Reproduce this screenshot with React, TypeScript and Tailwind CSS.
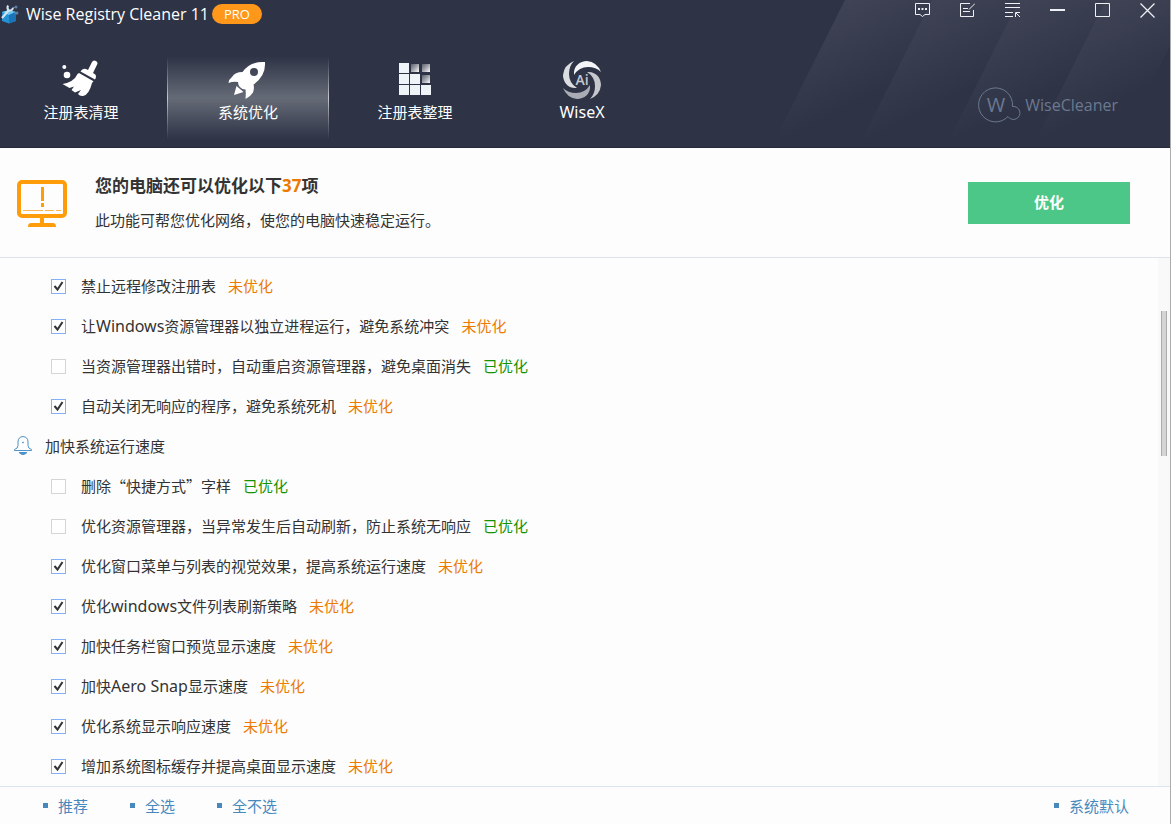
import type { ReactNode } from "react";

type Item = { id: string; label: ReactNode; done?: boolean };

const SECURITY_ITEMS: Item[] = [
  { id: "remote-registry", label: "禁止远程修改注册表" },
  { id: "separate-process", label: <>让<Latin>Windows</Latin>资源管理器以独立进程运行，避免系统冲突</> },
  { id: "restart-explorer", label: "当资源管理器出错时，自动重启资源管理器，避免桌面消失", done: true },
  { id: "close-hung", label: "自动关闭无响应的程序，避免系统死机" },
];

const SPEED_ITEMS: Item[] = [
  {
    id: "shortcut-text",
    // CJK face first, so that the quotes are full width
    label: <span className="font-['Noto_Sans_CJK_SC',sans-serif]">删除“快捷方式”字样</span>,
    done: true,
  },
  { id: "auto-refresh", label: "优化资源管理器，当异常发生后自动刷新，防止系统无响应", done: true },
  { id: "visual-effects", label: "优化窗口菜单与列表的视觉效果，提高系统运行速度" },
  { id: "file-list", label: <>优化<Latin>windows</Latin>文件列表刷新策略</> },
  { id: "taskbar-preview", label: "加快任务栏窗口预览显示速度" },
  { id: "aero-snap", label: <>加快<Latin>Aero Snap</Latin>显示速度</> },
  { id: "display-response", label: "优化系统显示响应速度" },
  { id: "icon-cache", label: "增加系统图标缓存并提高桌面显示速度" },
];

// Latin words are set a size larger than the Chinese text round them
function Latin({ children }: { children: ReactNode }) {
  return <span className="text-base leading-5">{children}</span>;
}

function AppLogo() {
  return (
    <svg width="20" height="20" viewBox="0 0 20 20">
      <path d="M2 8l7-2 7 2v9l-7 2.500-7-2.500z" fill="#2492d4" />
      <path d="M2 8l7 3 7-3-7-2z" fill="#6cc8f0" />
      <path d="M9 11v8.500l7-2.500V8z" fill="#1b73b8" />
      <path d="M12 4l4-1M13 8l4 2" stroke="#6c8fb5" />
      <circle cx="16" cy="3" r="1.500" fill="#5d7fa6" />
      <circle cx="17" cy="9" r="1.500" fill="#5d7fa6" />
      <path d="M2 14l7-8" stroke="#d5e4f1" strokeWidth="2.200" />
      <path d="M8 1.500Q6.500 5 9 6.500q3 .5 4-2.500" fill="none" stroke="#d5e4f1" strokeWidth="2" />
    </svg>
  );
}

function BroomIcon() {
  return (
    <svg width="40" height="40" viewBox="1 0 40 40" fill="#fff">
      <circle cx="4.300" cy="7" r="2" />
      <circle cx="7" cy="15" r="3.300" />
      <path d="M32 2a2.800 2.800 0 0 1 5 2.800l-4 8.200 2 1.200q2 2 0 5.300L20.500 11.500q2-3.700 5.500-2.500l2 1z" />
      <path d="M19 13l14.500 8.200-1.500 1.800Q29 35 23 36q-3 .5-5-2l3-4-6 2.500-3.500-2.500 2.500-3.500-4.500 1.500L2.500 24Q14 22 17.500 14z" />
    </svg>
  );
}

function RocketIcon() {
  return (
    <svg width="40" height="40" viewBox="0 0 40 40" fill="#fff">
      <path
        fillRule="evenodd"
        d="M37 2Q22 1 14.500 12 7 12 4 17 1 19 .5 23q5-2 9.500-1l.5 3q1 2.500 4 4l3 .5q.5 4 0 9.500 5-2.500 7.500-6.500 1.500-4 .5-8Q38 16 37 2zM26 8a4 4 0 1 1 0 8 4 4 0 0 1 0-8z"
      />
      <path d="M8.500 26l7 6-9.500 3z" />
    </svg>
  );
}

function DefragIcon() {
  return (
    <svg width="34" height="34" viewBox="0 0 34 34">
      <defs>
        <linearGradient id="block" x1="0" y1="0" x2="1" y2="1">
          <stop offset="0" stopColor="#5b606d" />
          <stop offset="0.500" stopColor="#a3a6ad" />
          <stop offset="1" stopColor="#fff" />
        </linearGradient>
      </defs>
      <path d="M1 0h10v10H1zM1 11h10v10H1zM12 11h10v10H12zM1 22h10v10H1zM12 22h10v10H12zM23 22h10v10H23z" fill="#eff4f8" />
      <path d="M13 1h8v8h-8z" fill="url(#block)" />
      <path d="M24 1h8v8h-8z" fill="url(#block)" />
      <path d="M24 12h8v8h-8z" fill="url(#block)" />
    </svg>
  );
}

// One blade, turned four times round the centre
function WiseXIcon() {
  const blade = "M11 14C10 5 17 0 24 0q10 1 14 11-5-5-13-5Q16 6 11 14z";
  return (
    <svg width="38" height="38" viewBox="0 0 38 38">
      <path d={blade} fill="#f4f5f6" />
      <path d={blade} fill="#dcdde1" transform="rotate(-90 19 19)" />
      <path d={blade} fill="#c6c8ce" transform="rotate(90 19 19)" />
      <path d={blade} fill="#a9acb5" transform="rotate(180 19 19)" />
      <text x="19" y="24" textAnchor="middle" fontSize="14" fontWeight="600" fill="#c6c8ce" fontFamily="Open Sans">Ai</text>
    </svg>
  );
}

function MonitorIcon() {
  return (
    <svg width="50" height="48" viewBox="0 0 50 48" className="shrink-0">
      <rect x="2" y="3" width="46" height="34" rx="3" fill="none" stroke="#ff9c0a" strokeWidth="4" />
      <path d="M24 8h3v14h-3zM24 24h3v4h-3zM23 39h4v5h9q3 0 3 4H11q0-4 3-4h9z" fill="#ff9c0a" />
      <path d="M6 31.500h20M28 31.500h9M39 31.500h5" stroke="#ffb54a" />
    </svg>
  );
}

function BellIcon() {
  return (
    <svg width="20" height="20" viewBox="0 0 20 20" fill="none" stroke="#4f93c8">
      <path d="M1.500 14.500v-1q3.500-1 3.500-4V6Q5 1 10 .5 15 1 15 6v3.500q0 3 3.500 4v1z" />
      <path d="M6 16.500q4 4 8 0z" fill="#4f93c8" />
      <circle cx="10" cy="6.500" r="0.500" fill="#4f93c8" />
    </svg>
  );
}

const TABS = [
  { label: "注册表清理", icon: <BroomIcon /> },
  { label: "系统优化", icon: <RocketIcon />, active: true },
  { label: "注册表整理", icon: <DefragIcon /> },
  { label: <Latin>WiseX</Latin>, icon: <WiseXIcon /> },
];

// Caption bar buttons, left to right
const WINDOW_BUTTONS: { label: string; icon: ReactNode }[] = [
  {
    label: "反馈",
    icon: (
      <>
        <path d="M.5 1.500h14v11H10L7.500 14.500 5 12.500H.5z" />
        <path d="M3 7h2M6.500 7h2M10 7h2" strokeWidth="2" />
      </>
    ),
  },
  { label: "日志", icon: <path d="M10 1.500H.5v13h13V8M3 6.500h5M3 9.500h7M9 7.500l6-6" /> },
  { label: "菜单", icon: <path d="M0 1.500h15M0 5.500h15M0 10.500h8M0 14.500h8M15 15l-4-4M10.500 15v-4.500H15" /> },
  { label: "最小化", icon: <path d="M0 8h15" strokeWidth="2" /> },
  { label: "最大化", icon: <path d="M.5 1.500h14v13H.5z" /> },
  { label: "关闭", icon: <path d="M.5 1.500l14 14M14.500 1.500l-14 14" strokeWidth="1.300" /> },
];

function HeaderStreaks() {
  return (
    <svg className="absolute top-0 right-0" width="390" height="148" viewBox="0 0 390 148">
      <defs>
        <linearGradient id="streak" x1="5" y1="0" x2="48" y2="85" gradientUnits="userSpaceOnUse">
          <stop offset="0" stopColor="#fff" stopOpacity="0.080" />
          <stop offset="1" stopColor="#fff" stopOpacity="0" />
        </linearGradient>
      </defs>
      <g fill="url(#streak)">
        <path d="M0 0h87L13 148H-74z" transform="translate(65)" />
        <path d="M0 0h87L13 148H-74z" transform="translate(152)" />
        <path d="M0 0h87L13 148H-74z" transform="translate(239)" />
        <path d="M0 0h87L13 148H-74z" transform="translate(326)" />
      </g>
    </svg>
  );
}

function BrandMark() {
  return (
    <div className="flex items-center gap-1 text-[#6b7990]">
      <svg width="44" height="36" viewBox="0 0 44 36" fill="none" stroke="currentColor">
        <path d="M35.500 19.500A17 17 0 1 0 31 29.500a6.500 6.500 0 1 0 4.500-10z" />
        <text x="19" y="25" textAnchor="middle" fontSize="20" stroke="none" fill="currentColor" fontFamily="Open Sans">W</text>
      </svg>
      <span className="text-base">WiseCleaner</span>
    </div>
  );
}

function OptionRow({ item }: { item: Item }) {
  return (
    <li className="flex h-10 items-center pl-[51px]">
      <input
        id={item.id}
        type="checkbox"
        defaultChecked={!item.done}
        className="size-[15px] shrink-0 appearance-none border border-[#d5d5d5] bg-white bg-center bg-no-repeat checked:border-[#86b0f4] checked:bg-[url('data:image/svg+xml,%3Csvg%20xmlns=%22http://www.w3.org/2000/svg%22%20width=%2213%22%20height=%2213%22%20viewBox=%220%200%2013%2013%22%3E%3Cpath%20d=%22M2.500%206l3%203.500L10.500%202%22%20fill=%22none%22%20stroke=%22%23333%22%20stroke-width=%222%22/%3E%3C/svg%3E')]"
      />
      <label htmlFor={item.id} className="pl-[15px]">{item.label}</label>
      <span className={item.done ? "pl-3 text-[#159300]" : "pl-3 text-[#ec7a00]"}>
        {item.done ? "已优化" : "未优化"}
      </span>
    </li>
  );
}

function FooterLink({ children }: { children: ReactNode }) {
  return (
    <a href="#" className="flex items-center gap-[10px] text-[#4889bd]">
      <span className="size-[5px] bg-[#4889bd]" />
      {children}
    </a>
  );
}

export default function App() {
  return (
    <div className="flex min-h-screen flex-col border-r border-[#acacac] bg-[#fdfdfd] font-['Noto_Sans','Noto_Sans_CJK_SC',sans-serif] text-[15px] leading-5 text-[#333]">
      <header className="relative flex h-[148px] justify-between overflow-hidden border-b border-[#25293a] bg-[#2e3346] text-white">
        <HeaderStreaks />
        <div className="relative">
          <div className="flex h-7 items-center font-['Open_Sans',sans-serif]">
            <AppLogo />
            <h1 className="pl-[6px] text-base">Wise Registry Cleaner 11</h1>
            <span className="ml-[3px] flex h-5 w-[50px] items-center justify-center rounded-full bg-[#ff981a] text-[13px]">PRO</span>
          </div>
          <nav className="mt-7 flex gap-[5px]">
            {TABS.map((tab, i) => (
              <button
                key={i}
                type="button"
                className="relative flex h-[84px] w-[162px] flex-col items-center"
              >
                {tab.active && (
                  <span className="absolute inset-0 border-x border-[#c4c6cb] bg-[#666b77] [mask-image:linear-gradient(transparent,black,transparent)]" />
                )}
                <span className="relative flex h-[46px] items-center justify-center pt-[2px]">{tab.icon}</span>
                <span className="relative">{tab.label}</span>
              </button>
            ))}
          </nav>
        </div>
        <div className="relative flex flex-col items-end justify-between pr-[15px] pb-6">
          <div className="flex gap-[30px] pt-[2px]">
            {WINDOW_BUTTONS.map((button) => (
              <button key={button.label} type="button" aria-label={button.label}>
                <svg width="15" height="17" viewBox="0 0 15 17" fill="none" stroke="#eef0f4">
                  {button.icon}
                </svg>
              </button>
            ))}
          </div>
          <div className="pr-[37px] font-['Open_Sans',sans-serif]">
            <BrandMark />
          </div>
        </div>
      </header>

      <section className="flex h-[110px] items-center border-b border-[#dbe3ec] pr-10 pl-[17px]">
        <MonitorIcon />
        <div className="flex-1 pb-[2px] pl-7">
          <h2 className="text-[17px] leading-6 font-bold">
            您的电脑还可以优化以下<span className="text-[#ec7a00]">37</span>项
          </h2>
          <p className="pt-3">此功能可帮您优化网络，使您的电脑快速稳定运行。</p>
        </div>
        <button type="button" className="h-[42px] w-[162px] bg-[#4cc787] pb-[2px] font-bold text-white">优化</button>
      </section>

      <main className="flex flex-1">
        <div className="flex-1 pt-2">
          <ul>
            {SECURITY_ITEMS.map((item) => <OptionRow key={item.id} item={item} />)}
          </ul>
          <h3 className="flex h-10 items-center gap-3 pl-[13px]">
            <BellIcon />
            加快系统运行速度
          </h3>
          <ul>
            {SPEED_ITEMS.map((item) => <OptionRow key={item.id} item={item} />)}
          </ul>
        </div>
        {/* Scrollbar */}
        <div className="w-3 bg-[#f9f9f9] pt-[53px] pl-[3px]">
          <div className="h-[145px] w-[6px] border-x border-[#acacac] bg-[#d4d4d4]" />
        </div>
      </main>

      <footer className="flex h-[38px] items-center border-t border-[#dbe3ec] pr-[41px] pl-[43px]">
        <div className="flex flex-1 gap-[42px]">
          <FooterLink>推荐</FooterLink>
          <FooterLink>全选</FooterLink>
          <FooterLink>全不选</FooterLink>
        </div>
        <FooterLink>系统默认</FooterLink>
      </footer>
    </div>
  );
}
